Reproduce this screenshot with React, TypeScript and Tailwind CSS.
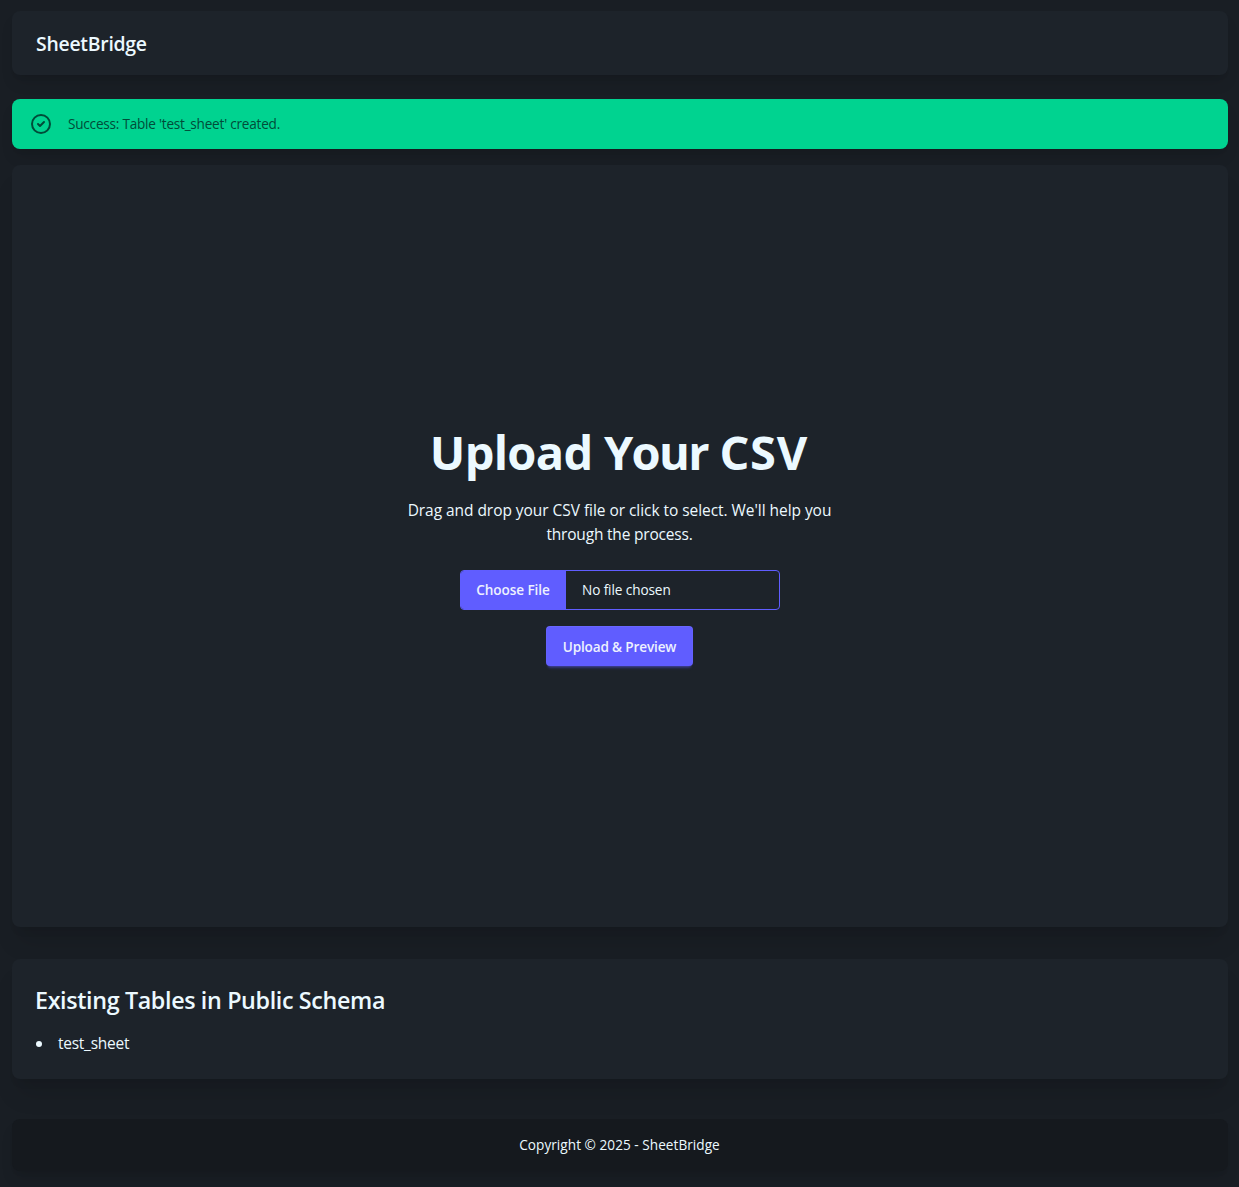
import React from 'react';

const tables = ['test_sheet'];

function Navbar() {
  return (
    <header className="flex h-16 items-center rounded-lg bg-[#1d232a] px-6 pt-px shadow-lg">
      <a className="text-[19.4px] leading-7 font-semibold tracking-[-0.25px]">SheetBridge</a>
    </header>
  );
}

function SuccessAlert() {
  return (
    <div
      role="alert"
      className="mt-6 flex h-[50px] items-center gap-4 rounded-lg bg-[#00d390] px-[17px] text-[#004c39] shadow-lg"
    >
      <svg className="h-6 w-6 shrink-0" fill="none" stroke="currentColor" viewBox="0 0 24 24">
        <path
          strokeLinecap="round"
          strokeLinejoin="round"
          strokeWidth="2"
          d="M9 12l2 2 4-4m6 2a9 9 0 11-18 0 9 9 0 0118 0z"
        />
      </svg>
      <span className="-ml-px text-[13.6px] leading-5 tracking-[-0.23px]">
        Success: Table 'test_sheet' created.
      </span>
    </div>
  );
}

function UploadForm() {
  return (
    <form className="flex flex-col items-center gap-4" onSubmit={(e) => e.preventDefault()}>
      <label className="flex h-10 w-80 cursor-pointer overflow-hidden rounded border border-[#605dff] text-[13.6px]">
        <span className="flex w-[105px] items-center justify-center bg-[#605dff] pt-px pr-px font-semibold tracking-[-0.1px] text-[#edf1fe]">
          Choose File
        </span>
        <span className="flex items-center pt-px pl-4 tracking-[-0.1px]">No file chosen</span>
        <input type="file" className="sr-only" />
      </label>
      <button className="mr-px h-10 w-[147px] rounded bg-[#605dff] pt-0.5 text-[13.6px] font-semibold tracking-[-0.16px] text-[#edf1fe] shadow-[inset_0_0.5px_0_0.5px_rgba(255,255,255,0.06),0_3px_2px_-2px_rgba(96,93,255,0.3),0_4px_3px_-2px_rgba(96,93,255,0.3)]">
        Upload &amp; Preview
      </button>
    </form>
  );
}

function Hero() {
  return (
    <section className="mt-4 flex h-[762px] items-center justify-center rounded-lg bg-[#1d232a] text-center shadow-xl">
      <div className="w-[448px]">
        <h1 className="pt-1 pr-0.5 text-[47px] leading-[44px] font-bold tracking-[-0.7px]">
          Upload <span className="tracking-[-1.7px]">Your</span>{' '}
          <span className="tracking-[0.8px]">CSV</span>
        </h1>
        <p className="py-6 pr-px text-[15.5px] leading-6 tracking-[-0.05px]">
          Drag and drop your CSV file or click to select. We'll help you{' '}
          <span className="tracking-[-0.2px]">through the process.</span>
        </p>
        <UploadForm />
      </div>
    </section>
  );
}

function TableList() {
  return (
    <section className="mt-8 h-[120px] rounded-lg bg-[#1d232a] p-6 shadow-xl">
      <h2 className="-ml-px mb-4 pt-0.5 text-[23.3px] leading-[30px] font-semibold tracking-[-0.36px]">
        Existing Tables in Public Schema
      </h2>
      <ul>
        {tables.map((name) => (
          <li key={name} className="flex items-center gap-4 text-[15.5px] leading-6 tracking-[-0.26px]">
            <span className="mt-px size-1.5 rounded-full bg-[#ecf9ff]" />
            <span className="pt-px leading-[23px]">{name}</span>
          </li>
        ))}
      </ul>
    </section>
  );
}

export default function App() {
  return (
    <div className="min-h-[1187px] bg-[#191e24] pt-[11px] pr-[11px] pb-4 pl-3 font-['Open_Sans',sans-serif] text-[#ecf9ff]">
      <Navbar />
      <SuccessAlert />
      <Hero />
      <TableList />
      <footer className="mt-10 flex h-[52px] items-center justify-center rounded-lg bg-[#15191e] text-[13.6px] leading-5 tracking-[0.04px] shadow-lg">
        <p className="pr-px pb-px">Copyright © 2025 - SheetBridge</p>
      </footer>
    </div>
  );
}
